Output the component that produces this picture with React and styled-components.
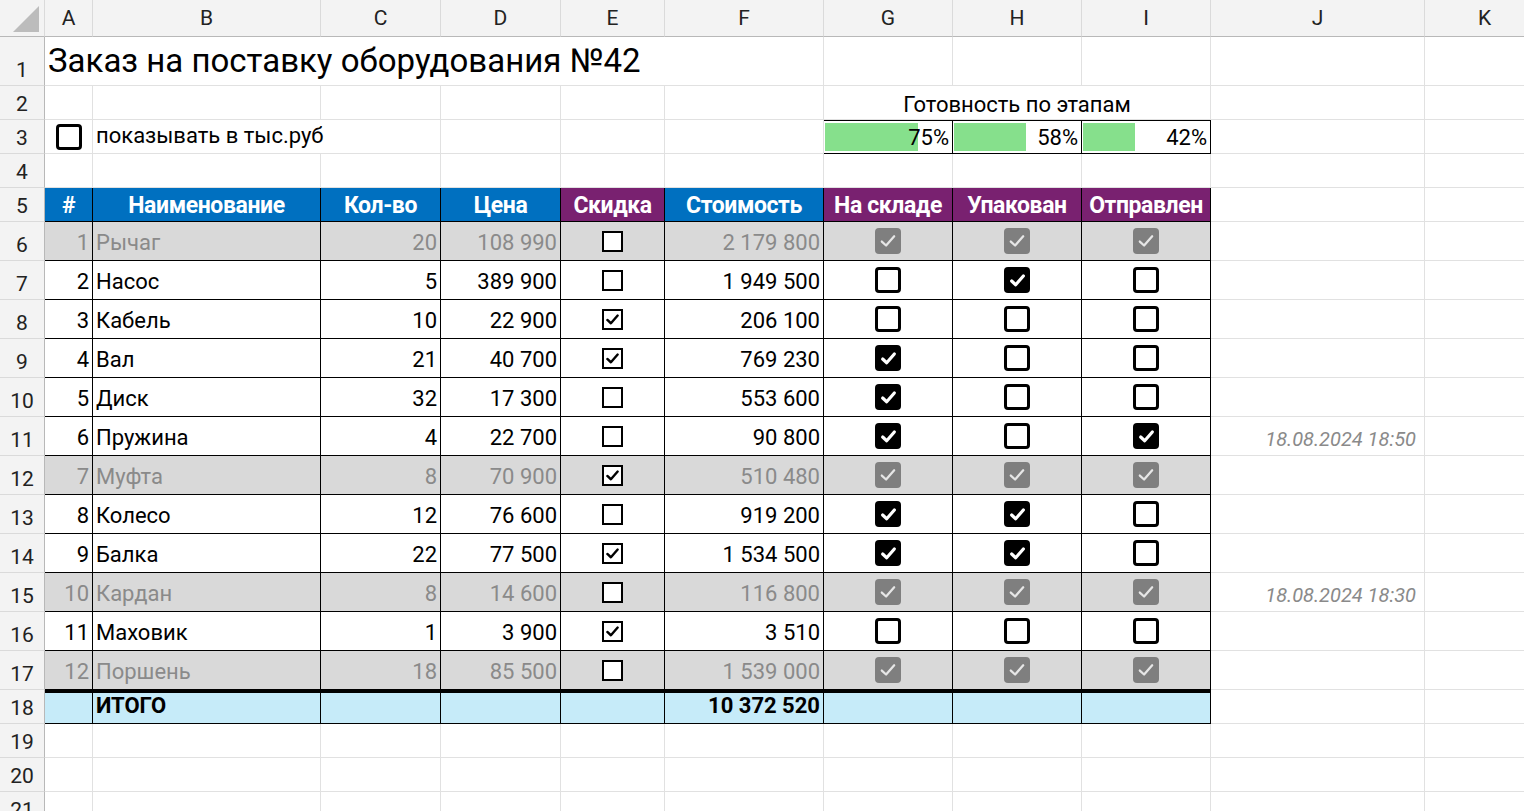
import React from 'react';
import styled, { createGlobalStyle, css } from 'styled-components';

const Global = createGlobalStyle`
  html, body { margin: 0; background: #fff; overflow: hidden; }
  body { font-family: Roboto, "Noto Sans", sans-serif; color: #000; }
`;

const COLS = [45, 48, 228, 120, 120, 104, 159, 129, 129, 129, 214, 120];
const ROWS = [37, 49, 34, 34, 34, 34, ...Array(12).fill(39), 34, 34, 34, 34];
const LETTERS = ['A', 'B', 'C', 'D', 'E', 'F', 'G', 'H', 'I', 'J', 'K'];

const items = [
  ['Рычаг', '20', '108 990', 0, '2 179 800', null, null],
  ['Насос', '5', '389 900', 0, '1 949 500', [0, 1, 0]],
  ['Кабель', '10', '22 900', 1, '206 100', [0, 0, 0]],
  ['Вал', '21', '40 700', 1, '769 230', [1, 0, 0]],
  ['Диск', '32', '17 300', 0, '553 600', [1, 0, 0]],
  ['Пружина', '4', '22 700', 0, '90 800', [1, 0, 1], '18.08.2024 18:50'],
  ['Муфта', '8', '70 900', 1, '510 480', null],
  ['Колесо', '12', '76 600', 0, '919 200', [1, 1, 0]],
  ['Балка', '22', '77 500', 1, '1 534 500', [1, 1, 0]],
  ['Кардан', '8', '14 600', 0, '116 800', null, '18.08.2024 18:30'],
  ['Маховик', '1', '3 900', 1, '3 510', [0, 0, 0]],
  ['Поршень', '18', '85 500', 0, '1 539 000', null],
];

const Sheet = styled.div`
  display: grid;
  grid-template-columns: ${COLS.map((c) => c + 'px').join(' ')};
  grid-template-rows: ${ROWS.map((r) => r + 'px').join(' ')};
  width: 1524px;
  height: 811px;
  overflow: hidden;
  font-size: 22px;
`;

const ColHead = styled.div`
  background: #f3f3f3;
  border-right: 1px solid #dadada;
  border-bottom: 1px solid #b8b8b8;
  display: flex;
  align-items: center;
  justify-content: center;
  font-size: 21px;
  color: #222;
  position: relative;
`;

const Corner = styled(ColHead)`
  &::after {
    content: '';
    position: absolute;
    right: 5px;
    bottom: 4px;
    border-left: 26px solid transparent;
    border-bottom: 26px solid #bcbcbc;
  }
`;

const RowHead = styled.div`
  background: #f3f3f3;
  border-right: 1px solid #b8b8b8;
  border-bottom: 1px solid #dadada;
  display: flex;
  align-items: flex-end;
  justify-content: center;
  padding-bottom: 3px;
  box-sizing: border-box;
  font-size: 21px;
  color: #222;
  overflow: hidden;
`;

const Cell = styled.div`
  box-sizing: border-box;
  border-right: 1px solid #e1e1e1;
  border-bottom: 1px solid #e1e1e1;
  display: flex;
  align-items: flex-end;
  padding: 0 3px 5px;
  white-space: nowrap;
  min-width: 0;
  justify-content: ${(p) => (p.$align === 'right' ? 'flex-end' : p.$align === 'center' ? 'center' : 'flex-start')};
  ${(p) => p.$span && css`grid-column: span ${p.$span};`}
  ${(p) => p.$table && css`
    border-right-color: #000;
    border-bottom-color: #000;
  `}
  ${(p) => p.$bg && css`background: ${p.$bg};`}
  ${(p) => p.$muted && css`color: #8a8a8a;`}
  ${(p) => p.$bold && css`font-weight: 700;`}
  ${(p) => p.$thickTop && css`border-top: 3px solid #000;`}
`;

const HeadCell = styled(Cell)`
  background: ${(p) => (p.$purple ? '#792170' : '#0070c0')};
  color: #fff;
  font-weight: 700;
  font-size: 23px;
  justify-content: center;
  align-items: center;
  padding: 2px 2px 0;
  border-right-color: #000;
  border-bottom-color: #000;
  letter-spacing: -0.4px;
`;

const Title = styled(Cell)`
  font-size: 33px;
  padding-bottom: 5px;
  overflow: visible;
`;

const Stamp = styled(Cell)`
  color: #8a8a8a;
  font-style: italic;
  font-size: 20px;
  align-items: center;
  justify-content: flex-end;
  padding: 6px 8px 0 0;
  overflow: visible;
`;

const ProgressCell = styled(Cell)`
  position: relative;
  border: 1px solid #000;
  border-left: none;
  justify-content: flex-end;
  align-items: center;
  padding: 0 3px 0 0;
  &:first-of-type { border-left: 1px solid #000; }
`;

const Bar = styled.div`
  position: absolute;
  left: 1px;
  top: 2px;
  bottom: 2px;
  background: #86e08c;
`;

const BarText = styled.span`
  position: relative;
`;

const Box = styled.span`
  display: inline-flex;
  align-items: center;
  justify-content: center;
  box-sizing: border-box;
  width: ${(p) => p.$size}px;
  height: ${(p) => p.$size}px;
  border: ${(p) => p.$w}px solid #000;
  border-radius: ${(p) => p.$r}px;
  background: ${(p) => p.$fill || '#fff'};
  ${(p) => p.$fill && css`border-color: ${p.$fill};`}
`;

const Check = ({ size = 16, color = '#fff', w = 3 }) => (
  <svg width={size} height={size} viewBox="0 0 16 16">
    <path d="M2.5 8.5 L6.3 12 L13.5 3.8" fill="none" stroke={color} strokeWidth={w} strokeLinecap="round" strokeLinejoin="round" />
  </svg>
);

const StageBox = ({ on, muted }) => {
  if (muted) return <Box $size={26} $w={0} $r={4} $fill="#7f7f7f"><Check size={18} color="#e6e6e6" w={2} /></Box>;
  if (on) return <Box $size={26} $w={0} $r={4} $fill="#000"><Check size={17} /></Box>;
  return <Box $size={26} $w={3} $r={4} />;
};

const DiscBox = ({ on }) => (
  <Box $size={21} $w={2} $r={0}>{on ? <Check size={15} color="#000" w={2.6} /> : null}</Box>
);

const MidCell = styled(Cell)`
  align-items: center;
  justify-content: center;
  padding: 0;
`;

export default function App() {
  const cells = [];
  const push = (el) => cells.push(React.cloneElement(el, { key: cells.length }));

  push(<Corner />);
  LETTERS.forEach((l) => push(<ColHead>{l}</ColHead>));

  const blankRow = () => {
    for (let i = 0; i < 11; i++) push(<Cell />);
  };

  push(<RowHead>1</RowHead>);
  push(<Title $span={6}>Заказ на поставку оборудования №42</Title>);
  for (let i = 6; i < 11; i++) push(<Cell />);

  push(<RowHead>2</RowHead>);
  for (let i = 0; i < 6; i++) push(<Cell />);
  push(<Cell $span={3} $align="center" style={{ paddingBottom: 2 }}>Готовность по этапам</Cell>);
  push(<Cell />);
  push(<Cell />);

  push(<RowHead>3</RowHead>);
  push(<MidCell><Box $size={26} $w={3} $r={4} /></MidCell>);
  push(<Cell $span={2}>показывать в тыс.руб</Cell>);
  for (let i = 0; i < 3; i++) push(<Cell />);
  [0.75, 0.58, 0.42].forEach((v) =>
    push(
      <ProgressCell>
        <Bar style={{ width: `${v * 124}px` }} />
        <BarText>{Math.round(v * 100)}%</BarText>
      </ProgressCell>
    )
  );
  push(<Cell />);
  push(<Cell />);

  push(<RowHead>4</RowHead>);
  blankRow();

  push(<RowHead>5</RowHead>);
  push(<HeadCell>#</HeadCell>);
  push(<HeadCell>Наименование</HeadCell>);
  push(<HeadCell>Кол-во</HeadCell>);
  push(<HeadCell>Цена</HeadCell>);
  push(<HeadCell $purple>Скидка</HeadCell>);
  push(<HeadCell>Стоимость</HeadCell>);
  push(<HeadCell $purple>На складе</HeadCell>);
  push(<HeadCell $purple>Упакован</HeadCell>);
  push(<HeadCell $purple>Отправлен</HeadCell>);
  push(<Cell />);
  push(<Cell />);

  items.forEach(([name, qty, price, disc, cost, stages, stamp], i) => {
    const muted = !stages;
    const bg = muted ? '#d9d9d9' : undefined;
    push(<RowHead>{i + 6}</RowHead>);
    push(<Cell $table $bg={bg} $muted={muted} $align="right">{i + 1}</Cell>);
    push(<Cell $table $bg={bg} $muted={muted}>{name}</Cell>);
    push(<Cell $table $bg={bg} $muted={muted} $align="right">{qty}</Cell>);
    push(<Cell $table $bg={bg} $muted={muted} $align="right">{price}</Cell>);
    push(<MidCell $table $bg={bg}><DiscBox on={disc} /></MidCell>);
    push(<Cell $table $bg={bg} $muted={muted} $align="right">{cost}</Cell>);
    [0, 1, 2].forEach((k) =>
      push(<MidCell $table $bg={bg}><StageBox muted={muted} on={stages && stages[k]} /></MidCell>)
    );
    push(stamp ? <Stamp>{stamp}</Stamp> : <Cell />);
    push(<Cell />);
  });

  push(<RowHead>18</RowHead>);
  const tot = '#c6ebf9';
  push(<Cell $table $thickTop $bg={tot} />);
  push(<Cell $table $thickTop $bg={tot} $bold>ИТОГО</Cell>);
  push(<Cell $table $thickTop $bg={tot} />);
  push(<Cell $table $thickTop $bg={tot} />);
  push(<Cell $table $thickTop $bg={tot} />);
  push(<Cell $table $thickTop $bg={tot} $bold $align="right">10 372 520</Cell>);
  push(<Cell $table $thickTop $bg={tot} />);
  push(<Cell $table $thickTop $bg={tot} />);
  push(<Cell $table $thickTop $bg={tot} />);
  push(<Cell />);
  push(<Cell />);

  [19, 20, 21].forEach((n) => {
    push(<RowHead>{n}</RowHead>);
    blankRow();
  });

  return (
    <>
      <Global />
      <Sheet>{cells}</Sheet>
    </>
  );
}
